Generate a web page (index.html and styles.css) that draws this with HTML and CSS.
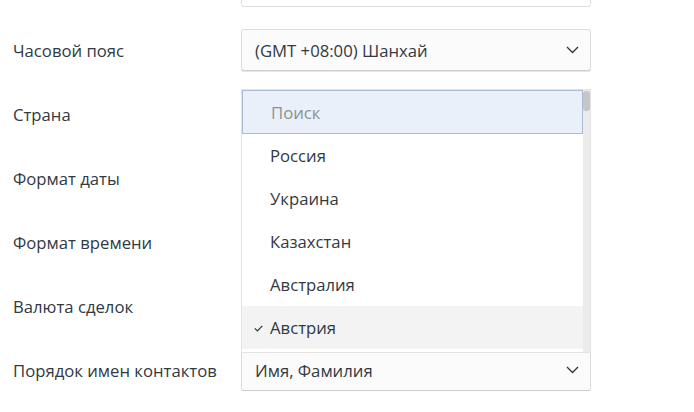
FILE: index.html
```html
<!DOCTYPE html>
<html lang="ru">
<head>
<meta charset="utf-8">
<link rel="stylesheet" href="styles.css">
</head>
<body>
<div class="form">
  <div class="row">
    <div class="label"></div>
    <div class="field"><div class="input"></div></div>
  </div>
  <div class="row">
    <div class="label">Часовой пояс</div>
    <div class="field"><div class="select"><span>(GMT +08:00) Шанхай</span><svg class="chev" width="13" height="8" viewBox="0 0 13 8"><path d="M1 1l5.5 5.5L12 1" fill="none" stroke="#333" stroke-width="1.3"/></svg></div></div>
  </div>
  <div class="row">
    <div class="label">Страна</div>
    <div class="field">
      <div class="select"></div>
      <div class="dropdown">
        <div class="list">
          <div class="search">Поиск</div>
          <div class="item">Россия</div>
          <div class="item">Украина</div>
          <div class="item">Казахстан</div>
          <div class="item">Австралия</div>
          <div class="item selected"><svg class="check" width="9" height="7" viewBox="0 0 9 7"><path d="M0.8 3.4l2.6 2.6L8.3 0.8" fill="none" stroke="#333" stroke-width="1.2"/></svg>Австрия</div>
        </div>
        <div class="scrollbar"><div class="thumb"></div></div>
      </div>
    </div>
  </div>
  <div class="row">
    <div class="label">Формат даты</div>
    <div class="field"><div class="select"></div></div>
  </div>
  <div class="row">
    <div class="label">Формат времени</div>
    <div class="field"><div class="select"></div></div>
  </div>
  <div class="row">
    <div class="label">Валюта сделок</div>
    <div class="field"><div class="select"></div></div>
  </div>
  <div class="row">
    <div class="label">Порядок имен контактов</div>
    <div class="field"><div class="select"><span>Имя, Фамилия</span><svg class="chev" width="13" height="8" viewBox="0 0 13 8"><path d="M1 1l5.5 5.5L12 1" fill="none" stroke="#333" stroke-width="1.3"/></svg></div></div>
  </div>
</div>
</body>
</html>
```
FILE: styles.css
```css
html, body {
  margin: 0;
  padding: 0;
  background: #fff;
  overflow: hidden;
}
body {
  font-family: "Open Sans", "Noto Sans", sans-serif;
  font-size: 16.7px;
  color: #313942;
}
.form {
  margin-top: -35px;
  padding-left: 13px;
  display: flex;
  flex-direction: column;
  gap: 22px;
}
.row {
  display: flex;
  align-items: center;
  height: 42px;
}
.label {
  width: 228px;
  flex: none;
  white-space: nowrap;
  padding-top: 1px;
}
.field {
  width: 350px;
  height: 42px;
  position: relative;
}
.input {
  height: 100%;
  box-sizing: border-box;
  border: 1px solid #dcdcdc;
  border-radius: 3px;
  background: #fff;
}
.select {
  height: 100%;
  box-sizing: border-box;
  border: 1px solid #dcdcdc;
  border-bottom-color: #cfcfcf;
  border-radius: 3px;
  background: #fbfbfb;
  box-shadow: 0 1px 0 #e6e6e6;
  display: flex;
  align-items: center;
  justify-content: space-between;
  padding: 0 11px 0 13px;
}
.chev {
  flex: none;
}
.dropdown {
  position: absolute;
  left: 0;
  top: -4px;
  width: 350px;
  height: 264px;
  background: #fff;
  border: 1px solid #e3e3e3;
  box-sizing: border-box;
  display: flex;
  overflow: hidden;
  z-index: 2;
}
.list {
  flex: 1;
}
.search {
  height: 44px;
  box-sizing: border-box;
  background: #eaf0fa;
  border: 1px solid #a9bcd8;
  display: flex;
  align-items: center;
  padding-left: 28px;
  color: #8c9096;
}
.item {
  height: 43px;
  display: flex;
  align-items: center;
  padding-left: 28px;
  position: relative;
}
.item.selected {
  background: #f3f3f3;
}
.check {
  position: absolute;
  left: 12px;
  top: 19px;
}
.scrollbar {
  width: 7px;
  flex: none;
  background: #ebebeb;
}
.thumb {
  height: 20px;
  margin-top: 1px;
  background: #c6c6c6;
  border-radius: 3px;
}
```
